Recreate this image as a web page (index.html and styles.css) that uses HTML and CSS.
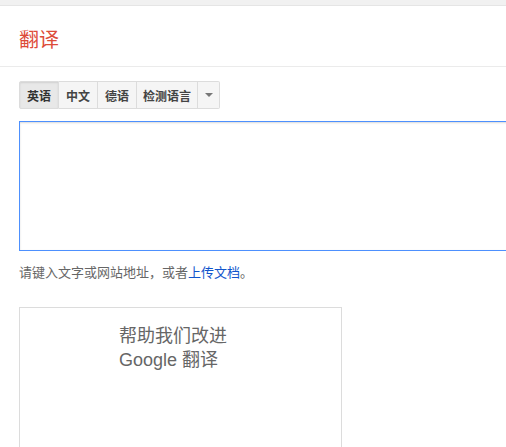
FILE: index.html
```html
<!DOCTYPE html>
<html lang="zh-CN">
<head>
<meta charset="utf-8">
<title>翻译</title>
<link rel="stylesheet" href="styles.css">
</head>
<body>
<div class="topbar"></div>
<header class="header"><h1 class="title">翻译</h1></header>
<main class="main">
  <div class="langs">
    <span class="lang selected">英语</span>
    <span class="lang">中文</span>
    <span class="lang">德语</span>
    <span class="lang detect">检测语言</span>
    <span class="lang drop"><span class="tri"></span></span>
  </div>
  <div class="source"></div>
  <p class="hint">请键入文字或网站地址，或者<a class="link" href="#">上传文档</a>。</p>
  <div class="card">
    <div class="card-text">帮助我们改进<br>Google 翻译</div>
  </div>
</main>
</body>
</html>
```
FILE: styles.css
```css
html, body {
  margin: 0;
  padding: 0;
  background: #fff;
  overflow: hidden;
  font-family: "Liberation Sans", "Noto Sans CJK SC", sans-serif;
}
.topbar {
  height: 5px;
  background: #f1f1f1;
  border-bottom: 1px solid #e5e5e5;
}
.header {
  height: 61px;
  border-bottom: 1px solid #ebebeb;
  box-sizing: border-box;
  padding: 19px 0 0 19px;
}
.title {
  margin: 0;
  font-size: 20px;
  font-weight: normal;
  line-height: 28px;
  color: #dd4b39;
  font-family: "Noto Sans CJK SC", sans-serif;
}
.main {
  padding: 14px 0 0 19px;
}
.langs {
  display: flex;
  height: 28px;
}
.lang {
  display: flex;
  align-items: center;
  padding: 0 7px;
  font-size: 12px;
  font-weight: bold;
  color: #444;
  background: #f5f5f5;
  border: 1px solid #dcdcdc;
  border-left: none;
  font-family: "Noto Sans CJK SC", sans-serif;
}
.lang:first-child {
  border-left: 1px solid #dcdcdc;
  border-radius: 2px 0 0 2px;
}
.lang.selected {
  background: #e8e8e8;
  box-shadow: inset 0 1px 2px rgba(0,0,0,0.1);
  color: #333;
}
.lang.detect {
  padding: 0 6px;
}
.lang.drop {
  width: 21px;
  padding: 0;
  justify-content: center;
  border-radius: 0 2px 2px 0;
}
.tri {
  width: 0;
  height: 0;
  border-left: 4px solid transparent;
  border-right: 4px solid transparent;
  border-top: 4px solid #777;
}
.source {
  margin-top: 12px;
  width: 600px;
  height: 130px;
  box-sizing: border-box;
  border: 1px solid #4d90fe;
  box-shadow: inset 0 1px 2px rgba(0,0,0,0.15);
}
.hint {
  margin: 12px 0 0;
  font-size: 13px;
  line-height: 18px;
  color: #666;
  font-family: "Noto Sans CJK SC", sans-serif;
}
.link {
  color: #1155cc;
  text-decoration: none;
}
.card {
  margin-top: 26px;
  width: 323px;
  height: 200px;
  box-sizing: border-box;
  border: 1px solid #dcdcdc;
  padding: 16px 0 0 99px;
}
.card-text {
  font-size: 18px;
  line-height: 24px;
  color: #666;
  font-family: "Liberation Sans", "Noto Sans CJK SC", sans-serif;
}
```
